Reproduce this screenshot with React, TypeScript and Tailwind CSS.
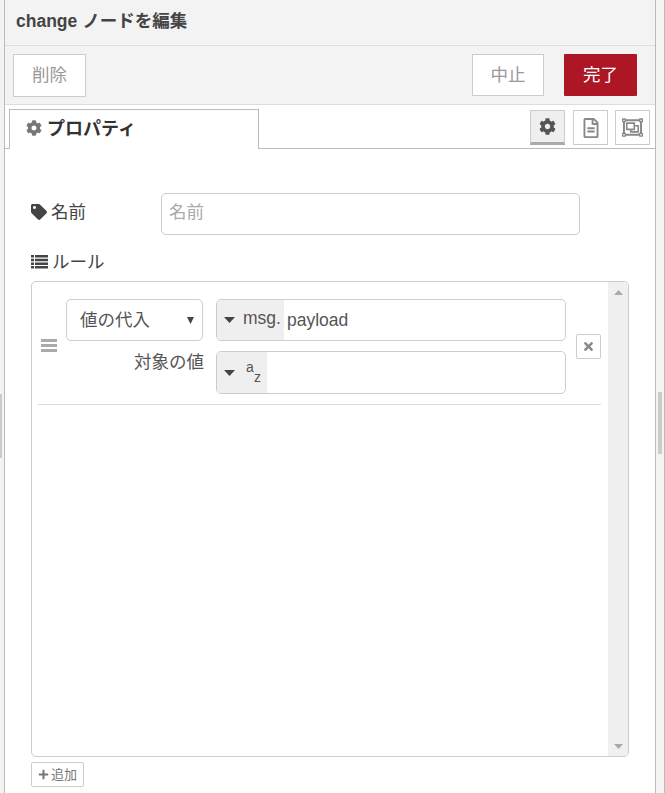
import { FaCog, FaPlus, FaRegFileAlt, FaRegObjectGroup, FaTag, FaTimes } from "react-icons/fa";

function Caret() {
  return (
    <svg width="11" height="6" viewBox="0 0 11 6" className="mr-[8px] shrink-0 fill-[#444]">
      <polygon points="0,0 11,0 5.5,6" />
    </svg>
  );
}

function ListIcon() {
  return (
    <svg width="17" height="14" viewBox="0 0 17 14" className="shrink-0 fill-[#444]">
      <path d="M0 0h3v2.5H0zM4 0h13v2.5H4zM0 3.7h3v2.5H0zM4 3.7h13v2.5H4zM0 7.4h3v2.5H0zM4 7.4h13v2.5H4zM0 11.1h3v2.5H0zM4 11.1h13v2.5H4z" />
    </svg>
  );
}

function GripIcon() {
  return (
    <svg width="16" height="13" viewBox="0 0 16 13" className="mb-[2px] ml-[3px] shrink-0 fill-[#aaa]">
      <path d="M0 0h16v3H0zM0 5h16v3H0zM0 10h16v3H0z" />
    </svg>
  );
}

function TypedInput({ label, height, children }: { label: React.ReactNode; height: string; children?: React.ReactNode }) {
  return (
    <div className={`flex w-[350px] overflow-hidden rounded-[5px] border border-[#ccc] bg-white ${height}`}>
      <div className="flex items-center bg-[#efefef] pl-[7px] pr-[3px] text-[#555]">
        <Caret />
        {label}
      </div>
      <div className="flex items-center pl-[3px] text-[#555]">{children}</div>
    </div>
  );
}

function TabButton({ active, children }: { active?: boolean; children: React.ReactNode }) {
  return (
    <div
      className={
        active
          ? "mr-[1px] flex h-[35px] w-[35px] items-center justify-center border border-b-[3px] border-[#ccc] border-b-[#aaa] bg-[#efefef] pb-[1px] text-[#555]"
          : "flex h-[35px] w-[35px] items-center justify-center border border-[#ccc] bg-white text-[#888]"
      }
    >
      {children}
    </div>
  );
}

export default function App() {
  return (
    <div className="flex h-[793px] w-[665px] overflow-hidden bg-[#f3f3f3] font-['Liberation_Sans','Noto_Sans_CJK_JP',sans-serif] text-[17.5px] text-[#555]">
      {/* left sash */}
      <div className="flex w-[4px] shrink-0 items-start pt-[394px]">
        <div className="h-[64px] w-[2px] bg-[#ccc]" />
      </div>

      <div className="flex w-[652px] shrink-0 flex-col border-x border-[#bbb] bg-white">
        <div className="flex h-[46px] shrink-0 items-center border-b border-[#ddd] bg-[#f3f3f3] pb-[2px] pl-[11px] font-bold text-[#444]">
          change ノードを編集
        </div>

        <div className="flex h-[59px] shrink-0 items-start justify-between border-b border-[#ddd] bg-[#f3f3f3] pl-[8px] pr-[18px] pt-[8px]">
          <button className="h-[43px] w-[73px] border border-[#ccc] bg-white text-[#999]">削除</button>
          <div className="flex gap-[20px]">
            <button className="h-[42px] w-[72px] border border-[#ccc] bg-white text-[#999]">中止</button>
            <button className="h-[42px] w-[73px] rounded-[1px] bg-[#ad1625] text-white">完了</button>
          </div>
        </div>

        {/* tabs */}
        <div className="flex h-[44px] shrink-0 items-end justify-between border-b border-[#bbb] pl-[4px] pr-[5px]">
          <div className="-mb-px flex h-[40px] w-[250px] items-start gap-[5px] border border-b-0 border-[#bbb] bg-white pl-[16px] pt-[6px] text-[18px] font-bold text-[#333]">
            <FaCog className="mt-[4px] text-[16px] text-[#777]" />
            プロパティ
          </div>
          <div className="mb-[3px] flex gap-[7px]">
            <TabButton active>
              <FaCog className="text-[17px]" />
            </TabButton>
            <TabButton>
              <FaRegFileAlt className="text-[20px]" />
            </TabButton>
            <TabButton>
              <FaRegObjectGroup className="text-[21px]" />
            </TabButton>
          </div>
        </div>

        {/* form */}
        <div className="flex min-h-0 flex-1 flex-col pl-[26px] pr-[26px] pt-[44px]">
          <div className="flex h-[42px] items-center">
            <div className="flex w-[130px] items-center gap-[4px] pb-[4px] text-[#444]">
              <FaTag className="text-[16px] text-[#444]" />
              名前
            </div>
            <input
              placeholder="名前"
              className="h-[42px] w-[419px] rounded-[5px] border border-[#ccc] bg-white px-[7px] pb-[4px] placeholder:text-[#aaa]"
            />
          </div>

          <div className="mt-[15px] flex h-[24px] items-center gap-[4px] text-[#444]">
            <ListIcon />
            ルール
          </div>

          <div className="mt-[7px] flex h-[476px] w-[598px] overflow-hidden rounded-[5px] border border-[#ccc] bg-white">
            <div className="min-w-0 flex-1">
              <div className="ml-[6px] mr-[7px] flex items-center border-b border-[#ddd] pb-[10px] pt-[17px]">
                <GripIcon />
                <div className="ml-[9px] w-[500px] shrink-0">
                  <div className="flex items-start gap-[13px]">
                    <div className="flex h-[42px] w-[137px] items-center justify-between rounded-[5px] border border-[#ccc] bg-white pl-[13px] pr-[8px] text-[#555]">
                      値の代入
                      <svg width="7" height="7" viewBox="0 0 7 7" className="fill-[#444]">
                        <polygon points="0,0 7,0 3.5,7" />
                      </svg>
                    </div>
                    <TypedInput height="h-[42px]" label={<span className="pb-[3px]">msg.</span>}>
                      payload
                    </TypedInput>
                  </div>
                  <div className="mt-[10px] flex items-start gap-[12px]">
                    <div className="w-[138px] text-right leading-[22px]">対象の値</div>
                    <TypedInput
                      height="h-[43px]"
                      label={
                        <span className="flex flex-col pb-[1px] pr-[3px] pl-[3px] text-[14px] leading-[10px]">
                          <span>a</span>
                          <span className="pl-[8px]">z</span>
                        </span>
                      }
                    />
                  </div>
                </div>
                <button className="ml-[10px] flex h-[25px] w-[25px] shrink-0 items-center justify-center rounded-[2px] border border-[#ccc] bg-white text-[#888]">
                  <FaTimes className="text-[13px]" />
                </button>
              </div>
            </div>
            <div className="flex w-[20px] shrink-0 flex-col items-center justify-between bg-[#f0f0f0] pb-[7px] pt-[8px]">
              <svg width="9" height="5" viewBox="0 0 9 5" className="fill-[#aaa]">
                <polygon points="4.5,0 9,5 0,5" />
              </svg>
              <svg width="9" height="5" viewBox="0 0 9 5" className="fill-[#aaa]">
                <polygon points="0,0 9,0 4.5,5" />
              </svg>
            </div>
          </div>

          <button className="mt-[5px] flex h-[25px] w-[53px] items-center justify-center gap-[2px] rounded-[2px] border border-[#ccc] bg-white text-[13px] text-[#777]">
            <FaPlus className="text-[11px]" />
            追加
          </button>
        </div>
      </div>

      {/* right sash */}
      <div className="flex min-w-0 flex-1 items-start border-r border-[#bbb] pl-[2px] pt-[392px]">
        <div className="h-[62px] w-[4px] bg-[#ccc]" />
      </div>
    </div>
  );
}
